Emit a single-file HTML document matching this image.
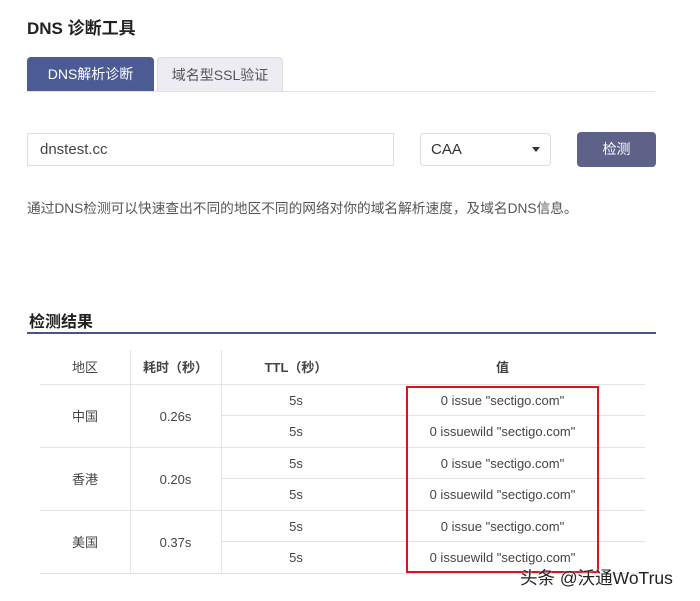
<!DOCTYPE html>
<html><head><meta charset="utf-8"><style>
*{margin:0;padding:0;box-sizing:border-box}
body{width:700px;height:601px;background:#fff;font-family:"Liberation Sans","Noto Sans CJK SC",sans-serif;color:#333;position:relative;overflow:hidden}
.a{position:absolute}
.title{left:27px;top:14px;font-size:17px;font-weight:bold;color:#222}
.tab{top:57px;height:35px;line-height:35px;text-align:center;font-size:14px;border-radius:4px 4px 0 0}
.hl{background:#e2e2e2;height:1px}
.vl{background:#e6e6e6;width:1px}
.c{text-align:center;font-size:13px;color:#444;height:20px;line-height:20px;margin-top:1px}
</style></head><body>
<div class="a title">DNS 诊断工具</div>
<div class="a tab" style="left:27px;width:127px;background:#4c5b94;color:#fff">DNS解析诊断</div>
<div class="a tab" style="left:157px;width:126px;background:#ececf2;color:#555;border:1px solid #ddd;border-bottom:none">域名型SSL验证</div>
<div class="a hl" style="left:27px;top:91px;width:628px"></div>
<div class="a" style="left:27px;top:133px;width:367px;height:33px;border:1px solid #ddd;font-size:15px;line-height:31px;padding-left:12px;color:#444">dnstest.cc</div>
<div class="a" style="left:420px;top:133px;width:131px;height:33px;border:1px solid #ddd;border-radius:4px;font-size:15px;line-height:31px;padding-left:10px;color:#333">CAA<span style="position:absolute;right:10px;top:13px;border:4px solid transparent;border-top:5px solid #333"></span></div>
<div class="a" style="left:577px;top:132px;width:79px;height:35px;background:#5e6289;border-radius:4px;color:#fff;font-size:14px;line-height:35px;text-align:center">检测</div>
<div class="a" style="left:27px;top:197px;font-size:13.7px;color:#555">通过DNS检测可以快速查出不同的地区不同的网络对你的域名解析速度，及域名DNS信息。</div>
<div class="a" style="left:29px;top:308px;font-size:16px;font-weight:bold;color:#222">检测结果</div>
<div class="a" style="left:27px;top:332px;width:629px;height:2px;background:#4a5585"></div>
<div class="a vl" style="left:130px;top:350px;height:223px"></div>
<div class="a vl" style="left:221px;top:350px;height:223px"></div>
<div class="a hl" style="left:40px;top:384px;width:605px"></div>
<div class="a hl" style="left:221px;top:415px;width:424px"></div>
<div class="a hl" style="left:40px;top:447px;width:605px"></div>
<div class="a hl" style="left:221px;top:478px;width:424px"></div>
<div class="a hl" style="left:40px;top:510px;width:605px"></div>
<div class="a hl" style="left:221px;top:541px;width:424px"></div>
<div class="a hl" style="left:40px;top:573px;width:605px"></div>
<div class="a c" style="left:40px;width:90px;top:357px">地区</div>
<div class="a c" style="left:130px;width:91px;top:357px;font-weight:bold">耗时（秒）</div>
<div class="a c" style="left:221px;width:150px;top:357px;font-weight:bold">TTL（秒）</div>
<div class="a c" style="left:406px;width:193px;top:357px;font-weight:bold">值</div>
<div class="a c" style="left:40px;width:90px;top:406px">中国</div>
<div class="a c" style="left:40px;width:90px;top:469px">香港</div>
<div class="a c" style="left:40px;width:90px;top:532px">美国</div>
<div class="a c" style="left:130px;width:91px;top:406px">0.26s</div>
<div class="a c" style="left:130px;width:91px;top:469px">0.20s</div>
<div class="a c" style="left:130px;width:91px;top:532px">0.37s</div>
<div class="a c" style="left:221px;width:150px;top:390px">5s</div>
<div class="a c" style="left:221px;width:150px;top:421px">5s</div>
<div class="a c" style="left:221px;width:150px;top:453px">5s</div>
<div class="a c" style="left:221px;width:150px;top:484px">5s</div>
<div class="a c" style="left:221px;width:150px;top:516px">5s</div>
<div class="a c" style="left:221px;width:150px;top:547px">5s</div>
<div class="a c" style="left:406px;width:193px;top:390px">0 issue "sectigo.com"</div>
<div class="a c" style="left:406px;width:193px;top:421px">0 issuewild "sectigo.com"</div>
<div class="a c" style="left:406px;width:193px;top:453px">0 issue "sectigo.com"</div>
<div class="a c" style="left:406px;width:193px;top:484px">0 issuewild "sectigo.com"</div>
<div class="a c" style="left:406px;width:193px;top:516px">0 issue "sectigo.com"</div>
<div class="a c" style="left:406px;width:193px;top:547px">0 issuewild "sectigo.com"</div>
<div class="a" style="left:406px;top:386px;width:193px;height:187px;border:2px solid #d9141c"></div>
<div class="a" style="left:520px;top:565px;font-size:17.5px;color:#222;text-shadow:0 0 2px #fff">头条 @沃通WoTrus</div>
</body></html>
